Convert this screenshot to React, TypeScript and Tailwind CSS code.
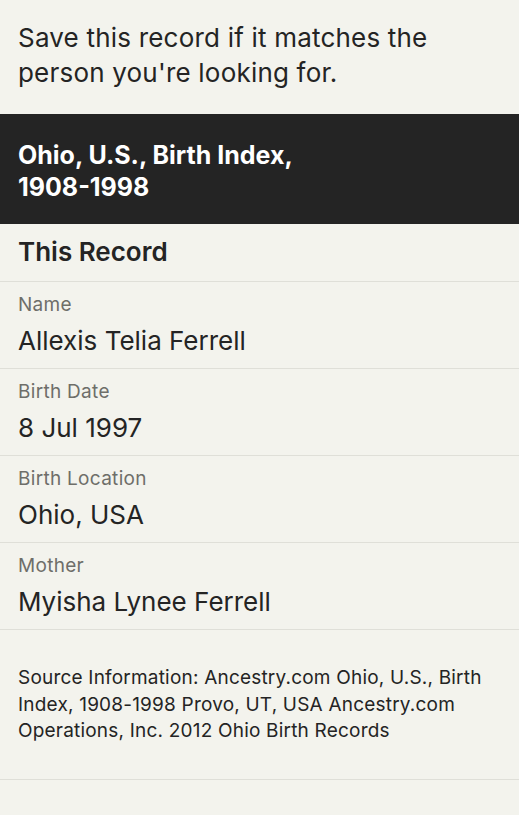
const rows = [
  { label: "Name", value: "Allexis Telia Ferrell" },
  { label: "Birth Date", value: "8 Jul 1997" },
  { label: "Birth Location", value: "Ohio, USA" },
  { label: "Mother", value: "Myisha Lynee Ferrell" },
];

export default function App() {
  return (
    <div
      className="min-h-[815px] bg-[#f3f3ed] text-[#242424]"
      style={{ fontFamily: "Inter, 'Liberation Sans', sans-serif" }}
    >
      <p className="px-[18px] pt-[20px] pb-[24px] text-[26px] leading-[35px] tracking-[0.2px]">
        Save this record if it matches the person you're looking for.
      </p>

      <div className="bg-[#242424] px-[18px] pt-[25px] pb-[21px]">
        <h1 className="max-w-[320px] text-[25px] font-bold leading-[32px] text-white">
          Ohio, U.S., Birth Index, 1908-1998
        </h1>
      </div>

      <h2 className="border-b border-[#dfdfd8] px-[18px] pt-[12px] pb-[13px] text-[26px] font-semibold leading-[32px]">
        This Record
      </h2>

      {rows.map((row) => (
        <div key={row.label} className="border-b border-[#dfdfd8] px-[18px] pt-[11px] pb-[11px]">
          <div className="text-[19px] leading-[24px] tracking-[0.3px] text-[#6e6e69]">{row.label}</div>
          <div className="mt-[8px] text-[26px] leading-[32px]">{row.value}</div>
        </div>
      ))}

      <p className="border-b border-[#dfdfd8] px-[18px] pt-[35px] pb-[34px] text-[19px] leading-[26.5px] tracking-[0.2px]">
        Source Information: Ancestry.com Ohio, U.S., Birth Index, 1908-1998 Provo, UT, USA
        Ancestry.com Operations, Inc. 2012 Ohio Birth Records
      </p>
    </div>
  );
}
